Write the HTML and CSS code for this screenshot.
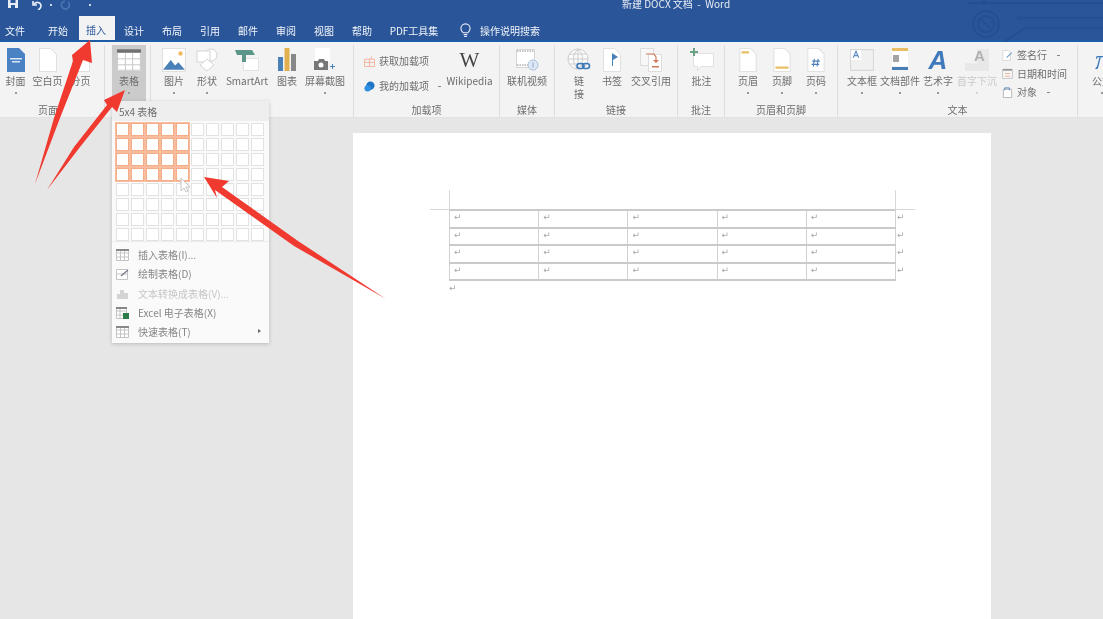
FILE: index.html
```html
<!DOCTYPE html>
<html lang="zh-CN">
<head>
    <meta charset="UTF-8">
    <meta name="viewport" content="width=device-width, initial-scale=1.0">
    <title>新建 DOCX 文档 - Word</title>
    <link rel="stylesheet" href="styles.css">
</head>
<body>
<div class="app">
    <div class="top">
        <svg class="circuit" viewBox="0 0 143 42" fill="none" stroke="#244e8e" stroke-width="1.5">
            <circle cx="26" cy="24" r="13"/><circle cx="26" cy="24" r="8"/><path d="M21 19l10 10"/>
            <path d="M8 3h135"/><circle cx="24" cy="3" r="2"/>
            <circle cx="60" cy="18" r="2"/><path d="M62 18h81M45 41l20-13h78"/>
        </svg>
        <div class="titlebar">
            <svg class="qat-save" viewBox="0 0 10 8"><path fill="#e8edf5" d="M0 0h10v8H0z"/><path fill="#2b579a" d="M2.5 0h5v3h-5zM3 5h4v3H3z"/></svg>
            <svg class="qat-undo" viewBox="0 0 10 10" fill="none" stroke="#e8edf5" stroke-width="1.6"><path d="M1 1v4h4"/><path d="M1.5 4.500C4 1 9 2 9 6c0 2-1 3-3 4"/></svg>
            <span class="qat-dot"></span>
            <svg class="qat-redo" viewBox="0 0 10 10" fill="none" stroke="#5076b0" stroke-width="1.5"><path d="M8 2a4 4 0 1 1-3-1"/></svg>
            <span class="qat-dot qat-dot-last"></span>
            <span class="doc-title">新建 DOCX 文档&nbsp;&nbsp;-&nbsp;&nbsp;Word</span>
        </div>
        <div class="tabs">
            <span class="tab tab-file">文件</span>
            <span class="tab">开始</span>
            <span class="tab active">插入</span>
            <span class="tab">设计</span>
            <span class="tab">布局</span>
            <span class="tab">引用</span>
            <span class="tab">邮件</span>
            <span class="tab">审阅</span>
            <span class="tab">视图</span>
            <span class="tab">帮助</span>
            <span class="tab tab-pdf">PDF工具集</span>
            <span class="tab-search">
                <svg viewBox="0 0 12 16" fill="none" stroke="#e8edf5" stroke-width="1.2"><path d="M3.5 10.500C2 9 1 8 1 5.800A5 5 0 0 1 11 5.800c0 2.200-1 3.200-2.500 4.700z"/><path d="M4 12.500h4M4.500 14.500h3"/></svg>
                操作说明搜索
            </span>
        </div>
    </div>

    <div class="ribbon">
        <div class="group g-pages">
            <div class="items">
                <div class="rb w31">
                    <div class="ico"><svg viewBox="0 0 18 24"><path fill="#4a82c4" d="M0 0h12l6 6v18H0z"/><path fill="#dbe7f5" d="M3 10h12v1.500H3zM5 13h8v1.500H5z"/></svg></div>
                    <span class="lb">封面</span><i class="dot"></i>
                </div>
                <div class="rb w33">
                    <div class="ico"><svg viewBox="0 0 18 24"><path fill="#fff" stroke="#e0e0e0" d="M.5.500h11l6 6v17H.5z"/></svg></div>
                    <span class="lb">空白页</span>
                </div>
                <div class="rb w33">
                    <div class="ico"><svg viewBox="0 0 18 24"><path fill="#fff" stroke="#e0e0e0" d="M.5 10.500h17v13H.5z"/><path fill="#a0a0a0" d="M0 7h18v1.500H0z"/></svg></div>
                    <span class="lb">分页</span>
                </div>
            </div>
            <div class="gl">页面</div>
        </div>

        <div class="group g-table">
            <div class="items">
                <div class="rb w34 rb-on">
                    <div class="ico"><svg viewBox="0 0 20 18"><path fill="#fff" d="M0 0h20v18H0z"/><path fill="#707070" d="M0 0h20v3H0z"/><path fill="none" stroke="#c6c6c6" stroke-width=".8" d="M.5 3v14.500h19V3M.5 8h19M.5 13h19M7 3v15M13 3v15"/></svg></div>
                    <span class="lb">表格</span><i class="dot"></i>
                </div>
            </div>
        </div>

        <div class="group g-illus">
            <div class="items">
                <div class="rb w34">
                    <div class="ico"><svg viewBox="0 0 22 22"><path fill="#fff" stroke="#e0e0e0" d="M.5.500h21v21H.5z"/><circle cx="17" cy="5" r="2" fill="#f0b860"/><path fill="#4a80b8" d="M1 20l7-9 4 5 3-3 6 7z"/></svg></div>
                    <span class="lb">图片</span><i class="dot"></i>
                </div>
                <div class="rb w32">
                    <div class="ico"><svg viewBox="0 0 22 24" fill="#fff" stroke="#d4d4d4"><circle cx="15" cy="7" r="6"/><path d="M1 3h13v11H1z"/><path d="M11 11l7 6-7 6-7-6z"/></svg></div>
                    <span class="lb">形状</span><i class="dot"></i>
                </div>
                <div class="rb w48">
                    <div class="ico"><svg viewBox="0 0 24 22"><path fill="#fff" stroke="#e2e2e2" d="M8.500 9.500h15v12h-15z"/><path fill="#5c9688" d="M0 1h17l3 5H11v7H7V6H2z"/></svg></div>
                    <span class="lb">SmartArt</span>
                </div>
                <div class="rb w32">
                    <div class="ico"><svg viewBox="0 0 18 24"><path fill="#4a80b8" d="M0 9h5v14H0z"/><path fill="#e2b04e" d="M6.500 0h5v23h-5z"/><path fill="#888" d="M13 6h5v17h-5z"/></svg></div>
                    <span class="lb">图表</span>
                </div>
                <div class="rb w44">
                    <div class="ico"><svg viewBox="0 0 24 24"><path fill="#fff" d="M2 0h15v14H2z"/><path fill="#777" d="M1 13h4l1-2h5l1 2h3v9H1z"/><circle cx="8" cy="17" r="2.500" fill="#fff"/><path fill="#4a80b8" d="M19 16h1v2h2v1h-2v2h-1v-2h-2v-1h2z"/></svg></div>
                    <span class="lb">屏幕截图</span><i class="dot"></i>
                </div>
            </div>
            <div class="gl">插图</div>
        </div>

        <div class="group g-addin">
            <div class="items">
                <div class="col-small">
                    <div class="small-row">
                        <svg class="sm" viewBox="0 0 12 12" fill="none" stroke="#f2b09a"><path d="M.5 3.500h11v8H.500zM6 3.500v8M.5 7h11M8 .500v3"/></svg>
                        <span class="lb">获取加载项</span>
                    </div>
                    <div class="small-row">
                        <svg class="sm" viewBox="0 0 12 12"><circle cx="7" cy="5" r="4.500" fill="#1f74c4"/><circle cx="4" cy="8" r="3.500" fill="#2f8fe0"/></svg>
                        <span class="lb">我的加载项</span><i class="dash dash-addin"></i>
                    </div>
                </div>
                <div class="rb w51">
                    <div class="ico ico-wiki">W</div>
                    <span class="lb">Wikipedia</span>
                </div>
            </div>
            <div class="gl">加载项</div>
        </div>

        <div class="group g-media">
            <div class="items">
                <div class="rb w54">
                    <div class="ico"><svg viewBox="0 0 24 24"><path fill="#fff" stroke="#d6d6d6" d="M1.500 1.500h18v18h-18z"/><path stroke="#888" stroke-dasharray="1.500 1" d="M2 3h17M2 17h12"/><circle cx="18" cy="17" r="5" fill="#dfe9f5" stroke="#a8c0dc"/><path fill="#8aa6ca" d="M17.500 14.500h1v5h-1z"/></svg></div>
                    <span class="lb">联机视频</span>
                </div>
            </div>
            <div class="gl">媒体</div>
        </div>

        <div class="group g-links">
            <div class="items">
                <div class="rb w34">
                    <div class="ico"><svg viewBox="0 0 24 24" fill="none"><circle cx="11" cy="11" r="10" fill="#fbfbfb" stroke="#cdcdcd"/><path stroke="#cdcdcd" d="M1 11h20M2.500 6h17M2.500 16h17M11 1v20M11 1c-6 5-6 15 0 20M11 1c6 5 6 15 0 20"/><rect x="10" y="15.500" width="7" height="5" rx="2.500" stroke="#3f7aba" stroke-width="1.600"/><rect x="15.500" y="15.500" width="7" height="5" rx="2.500" stroke="#3f7aba" stroke-width="1.600"/></svg></div>
                    <span class="lb lb-wrap">链<br>接</span>
                </div>
                <div class="rb w32">
                    <div class="ico"><svg viewBox="0 0 18 24"><path fill="#fff" stroke="#e0e0e0" d="M.5.500h11l6 6v17H.5z"/><path fill="#4a80b8" d="M9 5v13h1v-6l5-3z"/></svg></div>
                    <span class="lb">书签</span>
                </div>
                <div class="rb w46">
                    <div class="ico"><svg viewBox="0 0 22 24"><path fill="#f7f7f7" stroke="#dcdcdc" d="M.5.500h13v17H.5z"/><path fill="#fff" stroke="#dcdcdc" d="M8.500 6.500h13v17h-13z"/><path fill="none" stroke="#d07a5c" stroke-width="1.200" d="M6 6h8l2 3v4"/><path fill="#d07a5c" d="M13 12h6l-3 3zM12 18h7v1.500h-7z"/></svg></div>
                    <span class="lb">交叉引用</span>
                </div>
            </div>
            <div class="gl">链接</div>
        </div>

        <div class="group g-note">
            <div class="items">
                <div class="rb w47">
                    <div class="ico"><svg viewBox="0 0 24 24"><path fill="#fff" stroke="#e0e0e0" d="M3.500 5.500h20v13h-13l-3 4v-4h-4z"/><path fill="#6aa283" d="M3 0h2v3h3v2H5v3H3V5H0V3h3z"/></svg></div>
                    <span class="lb">批注</span>
                </div>
            </div>
            <div class="gl">批注</div>
        </div>

        <div class="group g-header">
            <div class="items">
                <div class="rb w34">
                    <div class="ico"><svg viewBox="0 0 16 22"><path fill="#fff" stroke="#e2e2e2" d="M.5.500h10l5 5v16H.500z"/><path fill="#e9bd63" d="M2 3h7v2H2z"/></svg></div>
                    <span class="lb">页眉</span><i class="dot"></i>
                </div>
                <div class="rb w34">
                    <div class="ico"><svg viewBox="0 0 16 22"><path fill="#fff" stroke="#e2e2e2" d="M.5.500h10l5 5v16H.500z"/><path fill="#e9bd63" d="M2 17h12v2H2z"/></svg></div>
                    <span class="lb">页脚</span><i class="dot"></i>
                </div>
                <div class="rb w34">
                    <div class="ico"><svg viewBox="0 0 16 22"><path fill="#fff" stroke="#e2e2e2" d="M.5.500h10l5 5v16H.500z"/><path fill="none" stroke="#4a80b8" d="M6.500 10l-1 7M10 10l-1 7M4.500 12h7M4 15h7"/></svg></div>
                    <span class="lb">页码</span><i class="dot"></i>
                </div>
            </div>
            <div class="gl">页眉和页脚</div>
        </div>

        <div class="group g-text">
            <div class="items">
                <div class="rb w38">
                    <div class="ico"><svg viewBox="0 0 22 20"><path fill="#f0f0f0" stroke="#d8d8d8" d="M.5.500h21v19H.500z"/><path fill="#fff" d="M1 1h9v9H1z"/><path fill="none" stroke="#5c8bc0" d="M3 8l2.500-6L8 8M4 6h3"/></svg></div>
                    <span class="lb">文本框</span><i class="dot"></i>
                </div>
                <div class="rb w38">
                    <div class="ico"><svg viewBox="0 0 16 24"><path fill="#e9bd63" d="M0 0h16v3H0z"/><path fill="#fff" d="M0 3h16v15H0z"/><path fill="#a4a4a4" d="M1 7h6v7H1z"/><path fill="#4a80b8" d="M0 19h16v3H0z"/></svg></div>
                    <span class="lb">文档部件</span><i class="dot"></i>
                </div>
                <div class="rb w38">
                    <div class="ico ico-art">A</div>
                    <span class="lb">艺术字</span><i class="dot"></i>
                </div>
                <div class="rb w40">
                    <div class="ico"><svg viewBox="0 0 22 22"><path fill="#e8e8e8" d="M11 1h11v20H0v-7h11z"/></svg><span class="drop-a">A</span></div>
                    <span class="lb lb-off">首字下沉</span><i class="dot dot-off"></i>
                </div>
                <div class="col-small col-text">
                    <div class="small-row">
                        <svg class="sm" viewBox="0 0 12 13" fill="none"><path fill="#fff" stroke="#d4d4d4" d="M.5.500h6l3 3v9h-9z"/><path stroke="#6a9acb" stroke-width="1.200" d="M5 9l6-6"/></svg>
                        <span class="lb">签名行</span><i class="dash dash-text"></i>
                    </div>
                    <div class="small-row">
                        <svg class="sm" viewBox="0 0 12 12" fill="none"><path fill="#f6f6f6" stroke="#c4c4c4" d="M.5 1.500h11v10H.500z"/><path fill="#999" d="M1 1h10v2H1z"/><path stroke="#e8b29c" d="M3 6h6M3 9h6"/></svg>
                        <span class="lb">日期和时间</span>
                    </div>
                    <div class="small-row">
                        <svg class="sm" viewBox="0 0 12 12" fill="none"><path fill="#fff" stroke="#b4b4b4" d="M1.500 2.500h9v9h-9z"/><path stroke="#4a80b8" d="M3 3.500V1h5v2.500"/></svg>
                        <span class="lb">对象</span><i class="dash dash-obj"></i>
                    </div>
                </div>
            </div>
            <div class="gl">文本</div>
        </div>

        <div class="group g-eq">
            <div class="items">
                <div class="rb w36">
                    <div class="ico ico-pi">π</div>
                    <span class="lb">公式</span><i class="dot"></i>
                </div>
            </div>
        </div>
    </div>

    <div class="workspace">
        <div class="page">
            <span class="crop crop-tl"></span><span class="crop crop-tr"></span>
            <span class="crop-h crop-hl"></span><span class="crop-h crop-hr"></span>
            <table class="doc-table">
                <tr><td>↵</td><td>↵</td><td>↵</td><td>↵</td><td>↵</td><td class="eor">↵</td></tr>
                <tr><td>↵</td><td>↵</td><td>↵</td><td>↵</td><td>↵</td><td class="eor">↵</td></tr>
                <tr><td>↵</td><td>↵</td><td>↵</td><td>↵</td><td>↵</td><td class="eor">↵</td></tr>
                <tr><td>↵</td><td>↵</td><td>↵</td><td>↵</td><td>↵</td><td class="eor">↵</td></tr>
            </table>
            <div class="para-mark">↵</div>
        </div>
    </div>

    <div class="menu">
        <div class="menu-head">5x4 表格</div>
        <div class="picker">
            <i class="on"></i><i class="on"></i><i class="on"></i><i class="on"></i><i class="on"></i><i></i><i></i><i></i><i></i><i></i>
            <i class="on"></i><i class="on"></i><i class="on"></i><i class="on"></i><i class="on"></i><i></i><i></i><i></i><i></i><i></i>
            <i class="on"></i><i class="on"></i><i class="on"></i><i class="on"></i><i class="on"></i><i></i><i></i><i></i><i></i><i></i>
            <i class="on"></i><i class="on"></i><i class="on"></i><i class="on"></i><i class="on"></i><i></i><i></i><i></i><i></i><i></i>
            <i></i><i></i><i></i><i></i><i></i><i></i><i></i><i></i><i></i><i></i>
            <i></i><i></i><i></i><i></i><i></i><i></i><i></i><i></i><i></i><i></i>
            <i></i><i></i><i></i><i></i><i></i><i></i><i></i><i></i><i></i><i></i>
            <i></i><i></i><i></i><i></i><i></i><i></i><i></i><i></i><i></i><i></i>
        </div>
        <div class="menu-list">
            <div class="mi">
                <svg viewBox="0 0 13 12"><path fill="#fff" stroke="#c4c4c4" d="M.5.500h12v11H.500zM.5 4h12M.5 8h12M4.500 1v10M8.500 1v10"/><path fill="#888" d="M0 0h13v2H0z"/></svg>
                <span>插入表格(I)...</span>
            </div>
            <div class="mi">
                <svg viewBox="0 0 13 12"><path fill="#fff" stroke="#c4c4c4" d="M.5 1.500h11v10H.500zM.5 6h11"/><path stroke="#778" stroke-width="1.300" d="M5 8l7-6"/></svg>
                <span>绘制表格(D)</span>
            </div>
            <div class="mi mi-off">
                <svg viewBox="0 0 13 12"><path fill="#d4d4d4" d="M1 12V7h3V3h4v3h4v6z"/></svg>
                <span>文本转换成表格(V)...</span>
            </div>
            <div class="mi">
                <svg viewBox="0 0 13 12"><path fill="#fff" stroke="#c4c4c4" d="M.5.500h10v11H.500zM.5 4h10M.5 8h10M4 1v10"/><path fill="#888" d="M0 0h11v2H0z"/><path fill="#2a7a4a" d="M7 6h6v6H7z"/></svg>
                <span>Excel 电子表格(X)</span>
            </div>
            <div class="mi">
                <svg viewBox="0 0 13 12"><path fill="#fff" stroke="#c4c4c4" d="M.5.500h12v11H.500zM.5 4h12M.5 8h12M4.500 1v10M8.500 1v10"/><path fill="#888" d="M0 0h13v2H0z"/></svg>
                <span>快速表格(T)</span>
                <b class="mi-arrow"></b>
            </div>
        </div>
    </div>

    <svg class="arrows" viewBox="0 0 1103 619">
        <path fill="#fff" stroke="#c4c4c4" d="M181 178v13l3-3 2 4 2-1-2-4h4z"/>
        <path fill="#f03a30" d="M90 40 92 63 83 60 60 118 35 184 54 118 73 61 72 55z"/>
        <path fill="#f03a30" d="M125 90 117 112 112 107 80 147 47 190 74 147 107 105 104 100z"/>
        <path fill="#f03a30" d="M204 177 229 181 222 187 298 241 386 299 294 246 215 190 217 198z"/>
    </svg>
</div>
</body>
</html>
```

FILE: styles.css
```css
* {
    box-sizing: border-box;
}
body {
    margin: 0;
    font-family: "Noto Sans CJK SC", "Noto Sans", sans-serif;
    font-size: 10px;
    color: #6e6e6e;
    overflow: hidden;
}
.app {
    position: relative;
    width: 1103px;
    height: 619px;
    overflow: hidden;
    display: flex;
    flex-direction: column;
    background: #e6e6e6;
    filter: blur(0.5px);
}

/* title bar and tabs */
.top {
    position: relative;
    height: 42px;
    background: #2a5699;
    border-bottom: 2px solid #1c5ba6;
}
.circuit {
    position: absolute;
    top: 0;
    left: 960px;
    width: 143px;
    height: 42px;
}
.titlebar {
    position: relative;
    height: 18px;
    display: flex;
    align-items: flex-start;
    color: #fff;
}
.qat-save {
    width: 10px;
    height: 8px;
    margin-left: 8px;
}
.qat-undo {
    width: 10px;
    height: 10px;
    margin-left: 14px;
}
.qat-dot {
    width: 2px;
    height: 2px;
    margin: 4px 0 0 8px;
    background: #c9d6ea;
}
.qat-redo {
    width: 10px;
    height: 10px;
    margin-left: 8px;
}
.qat-dot-last {
    margin-left: 19px;
}
.doc-title {
    margin-left: 531px;
    font-size: 10px;
    line-height: 8px;
    color: #e8edf5;
}
.tabs {
    position: relative;
    height: 22px;
    display: flex;
    color: #f2f5fa;
}
.tab {
    width: 38px;
    line-height: 26px;
    text-align: center;
    white-space: nowrap;
}
.tab-file {
    width: 30px;
    margin-right: 9px;
}
.tab.active {
    width: 36px;
    height: 24px;
    margin-top: -2px;
    margin-left: 2px;
    padding-right: 2px;
    line-height: 28px;
    background: #f3f3f3;
    color: #2a5699;
}
.tab-pdf {
    width: 66px;
}
.tab-search {
    display: flex;
    align-items: center;
    height: 25px;
    margin-left: 13px;
    gap: 9px;
}
.tab-search svg {
    width: 11px;
    height: 15px;
}

/* ribbon */
.ribbon {
    height: 76px;
    flex: none;
    display: flex;
    background: #f3f3f3;
    border-bottom: 1px solid #e2e2e2;
}
.group {
    height: 72px;
    margin-top: 3px;
    display: flex;
    flex-direction: column;
    border-right: 1px solid #dedede;
    flex: none;
}
.items {
    height: 58px;
    display: flex;
}
.gl {
    height: 14px;
    line-height: 14px;
    text-align: center;
}
.g-pages { width: 105px; }
.g-pages .gl { padding-right: 8px; }
.g-table { width: 46px; }
.g-table .items { padding-left: 7px; }
.g-illus { width: 203px; }
.g-illus .items { padding-left: 6px; }
.g-addin { width: 146px; }
.g-addin .items { padding-left: 10px; }
.g-media { width: 55px; }
.g-links { width: 123px; }
.g-links .items { padding-left: 7px; }
.g-note { width: 47px; }
.g-header { width: 113px; }
.g-header .items { padding-left: 6px; }
.g-text { width: 240px; }
.g-text .items { padding-left: 5px; }
.g-eq { width: 60px; border-right: none; }
.g-eq .items { padding-left: 6px; }

.rb {
    height: 56px;
    padding-top: 1px;
    display: flex;
    flex-direction: column;
    align-items: center;
    flex: none;
}
.rb-on {
    background: #cbcbcb;
}
.w31 { width: 31px; }
.w32 { width: 32px; }
.w33 { width: 33px; }
.w34 { width: 34px; }
.w36 { width: 36px; }
.w38 { width: 38px; }
.w40 { width: 40px; }
.w44 { width: 44px; }
.w46 { width: 46px; }
.w47 { width: 47px; }
.w48 { width: 48px; }
.w51 { width: 51px; }
.w54 { width: 54px; }
.ico {
    position: relative;
    height: 28px;
    display: flex;
    align-items: center;
    justify-content: center;
}
.ico svg {
    height: 24px;
    width: 24px;
}
.lb {
    line-height: 14px;
    white-space: nowrap;
}
.lb-wrap {
    line-height: 13px;
}
.lb-off {
    color: #c8c8c8;
}
.dot {
    width: 2px;
    height: 2px;
    margin-top: 4px;
    background: #999;
}
.dot-off {
    background: #d4d4d4;
}
.ico-wiki {
    font-family: "Liberation Serif", serif;
    font-size: 21px;
    color: #444;
}
.ico-art {
    font-family: "Liberation Sans", sans-serif;
    font-size: 26px;
    font-style: italic;
    font-weight: bold;
    color: #3f7aba;
}
.ico-pi {
    font-family: "Liberation Serif", serif;
    font-size: 28px;
    font-style: italic;
    color: #3f7aba;
}
.drop-a {
    position: absolute;
    left: 9px;
    top: 1px;
    font-family: "Liberation Sans", sans-serif;
    font-size: 15px;
    font-weight: bold;
    color: #b0b0b0;
}
.col-small {
    width: 80px;
    display: flex;
    flex-direction: column;
    justify-content: space-between;
}
.g-addin .col-small {
    height: 49px;
    padding-top: 8px;
}
.col-text {
    height: 55px;
    padding: 2px 0 0 5px;
}
.small-row {
    display: flex;
    align-items: center;
    height: 16px;
    gap: 4px;
}
.sm {
    width: 11px;
    height: 11px;
    flex: none;
}
.dash {
    width: 3px;
    height: 1px;
    background: #888;
}
.dash-addin {
    margin-left: 5px;
}
.dash-text {
    margin-left: 6px;
}
.dash-obj {
    margin-left: 6px;
}

/* document */
.workspace {
    flex: 1;
    padding: 15px 0 0 353px;
    overflow: hidden;
}
.page {
    position: relative;
    width: 638px;
    height: 500px;
    padding: 76px 0 0 96px;
    background: #fff;
}
.crop {
    position: absolute;
    top: 57px;
    width: 1px;
    height: 19px;
    background: #d8d8d8;
}
.crop-tl { left: 96px; }
.crop-tr { left: 542px; }
.crop-h {
    position: absolute;
    top: 76px;
    width: 20px;
    height: 1px;
    background: #d8d8d8;
}
.crop-hl { left: 77px; }
.crop-hr { left: 542px; }
.doc-table {
    border-collapse: collapse;
    table-layout: fixed;
    width: 466px;
    font-family: "DejaVu Sans", sans-serif;
    font-size: 9px;
    color: #a8a8a8;
}
.doc-table td {
    width: 89.200px;
    height: 17.500px;
    padding: 0 0 3px 4px;
    border: 1px solid #d2d2d2;
    border-top: 2px solid #cacaca;
    border-bottom: 2px solid #cacaca;
    line-height: 10px;
}
.doc-table td.eor {
    width: 20px;
    padding-left: 1px;
    border: none;
}
.para-mark {
    padding-top: 2px;
    font-family: "DejaVu Sans", sans-serif;
    font-size: 9px;
    line-height: 10px;
    color: #a8a8a8;
}

/* table dropdown */
.menu {
    position: absolute;
    top: 101px;
    left: 112px;
    width: 157px;
    height: 242px;
    background: #fafafa;
    box-shadow: 0 1px 4px rgba(0, 0, 0, 0.2);
}
.menu-head {
    height: 20px;
    padding-left: 7px;
    line-height: 21px;
    background: #eeeeee;
    font-size: 10px;
}
.picker {
    display: grid;
    grid-template-columns: repeat(10, 13px);
    grid-auto-rows: 13px;
    gap: 2px;
    padding: 2px 0 0 4px;
}
.picker i {
    border: 1px solid #e2e2e2;
    background: #fff;
}
.picker i.on {
    border: 1px solid #f4ad87;
    box-shadow: 0 0 0 1px #f7bd9e;
}
.menu-list {
    padding-top: 3px;
    border-top: 1px solid #ececec;
}
.mi {
    position: relative;
    height: 19.300px;
    display: flex;
    align-items: center;
    gap: 9px;
    padding-left: 4px;
    color: #858585;
}
.mi svg {
    width: 13px;
    height: 12px;
    flex: none;
}
.mi-off {
    color: #c6c6c6;
}
.mi-arrow {
    position: absolute;
    right: 8px;
    top: 7px;
    border-left: 3px solid #666;
    border-top: 2.500px solid transparent;
    border-bottom: 2.500px solid transparent;
}

/* annotation arrows */
.arrows {
    position: absolute;
    top: 0;
    left: 0;
    width: 1103px;
    height: 619px;
    pointer-events: none;
}
```
